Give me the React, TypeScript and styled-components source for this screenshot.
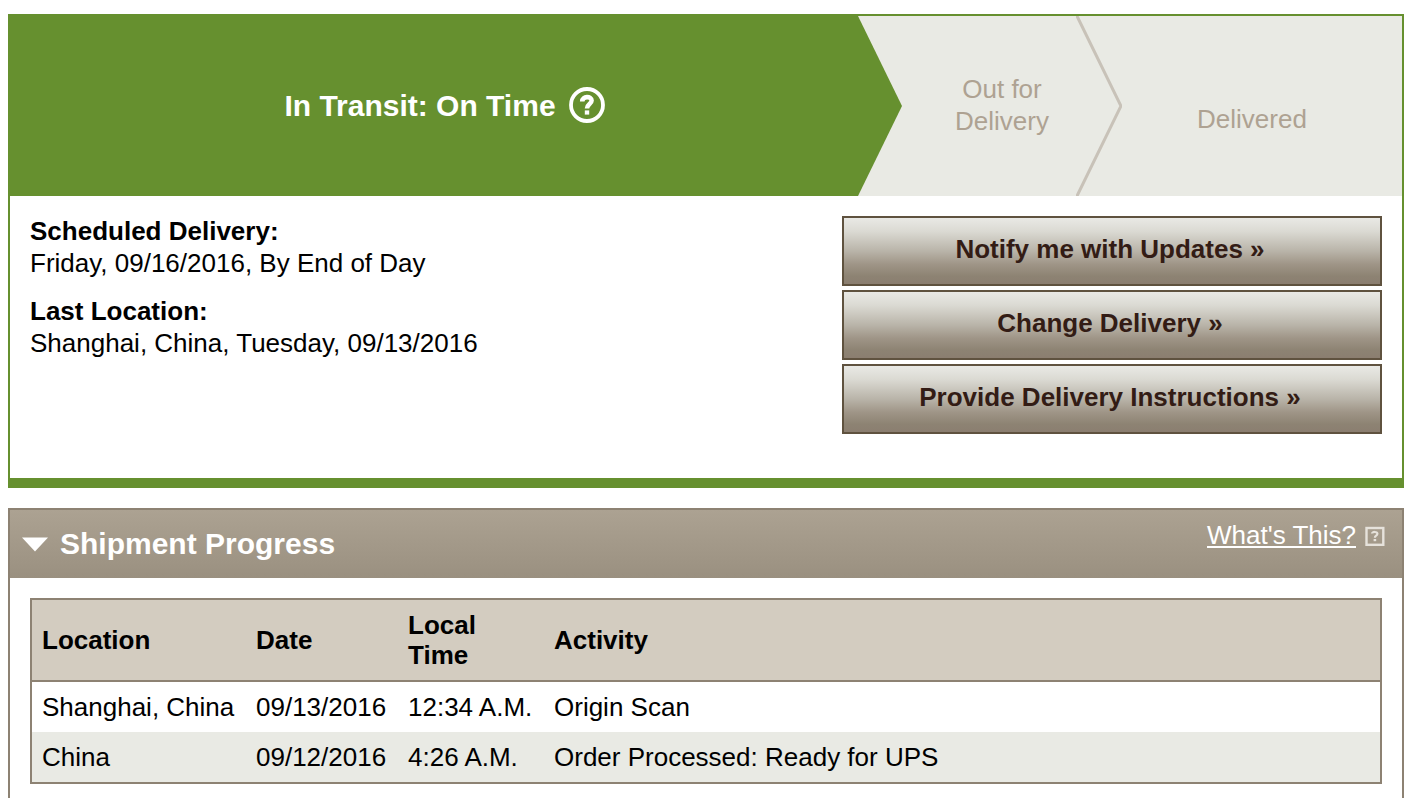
import React from "react";
import styled, { createGlobalStyle } from "styled-components";

const GlobalStyle = createGlobalStyle`
  * { box-sizing: border-box; }
  html { scrollbar-width: none; }
  body {
    margin: 0;
    background: #fff;
    color: #000;
    font-family: "Liberation Sans", Arial, sans-serif;
    font-size: 26px;
    line-height: 32px;
  }
`;

const green = "#66902f";
const taupe = "#8d8273";
const mist = "#e9eae4";

const Page = styled.main`
  display: flex;
  flex-direction: column;
  gap: 20px;
  padding: 14px 16px 0 8px;
`;

const StatusCard = styled.section`
  border: 2px solid ${green};
  border-bottom-width: 10px;
`;

const Steps = styled.ol`
  display: grid;
  grid-template-columns: 892fr 220fr 280fr;
  height: 180px;
  margin: 0;
  padding: 0;
  list-style: none;
  background: ${mist};
`;

const Step = styled.li`
  display: flex;
  color: #aea292;
`;

const StepLabel = styled.div`
  flex: 1;
  display: flex;
  align-items: center;
  justify-content: center;
  text-align: center;
  padding: 0 0 2px 26px;
`;

const CurrentLabel = styled(StepLabel)`
  gap: 12px;
  padding: 0 0 0 22px;
  background: ${green};
  color: #fff;
  font-size: 30px;
  font-weight: bold;
`;

const FinalLabel = styled(StepLabel)`
  padding: 26px 20px 0 0;
`;

const Chevron = styled.svg`
  flex: none;
  display: block;
`;

const IconButton = styled.button`
  display: flex;
  padding: 0;
  border: 0;
  background: none;
  color: inherit;
  cursor: pointer;
`;

const Details = styled.div`
  display: flex;
  justify-content: space-between;
  padding: 20px 20px 44px;
`;

const Facts = styled.dl`
  margin: -1px 0 0;
`;

const Term = styled.dt`
  font-weight: bold;
`;

const Value = styled.dd`
  margin: 0 0 16px;
`;

const Actions = styled.div`
  display: flex;
  flex-direction: column;
  gap: 4px;
  width: 540px;
`;

const ActionButton = styled.button`
  height: 70px;
  padding: 0 4px 4px 0;
  border: 2px solid #5f523f;
  background: linear-gradient(
    #e9e9e5 0%,
    #dbdad3 20%,
    #b9b4a9 50%,
    #9f9587 70%,
    #8d8373 88%,
    #8b7e70 100%
  );
  color: #331c15;
  font: bold 26px/32px "Liberation Sans", Arial, sans-serif;
  cursor: pointer;
`;

const Panel = styled.section`
  border: 2px solid ${taupe};
`;

const PanelHeader = styled.header`
  display: flex;
  justify-content: space-between;
  height: 68px;
  padding: 0 17px 0 12px;
  background: linear-gradient(#aca292, #9a9080);
  color: #fff;
`;

const PanelTitle = styled.h2`
  margin: 0;
  font-size: 30px;
  display: flex;
`;

const Toggle = styled.button`
  display: flex;
  align-items: center;
  gap: 12px;
  padding: 0;
  border: 0;
  background: none;
  color: inherit;
  font: inherit;
  cursor: pointer;
`;

const Help = styled.div`
  display: flex;
  align-items: center;
  gap: 9px;
  height: 50px;
`;

const HelpLink = styled.a`
  color: #fff;
  text-decoration: underline;
  text-decoration-thickness: 2px;
  text-underline-offset: 2px;
`;

const PanelBody = styled.div`
  padding: 20px;
`;

const ScanTable = styled.table`
  width: 100%;
  table-layout: fixed;
  border: 2px solid ${taupe};
  border-spacing: 0;
  line-height: 30px;
  text-align: left;
`;

const Column = styled.col<{ $width?: number }>`
  width: ${(p) => (p.$width ? `${p.$width}px` : "auto")};
`;

const HeadCell = styled.th`
  padding: 10px;
  border-bottom: 2px solid ${taupe};
  background: #d3ccc0;
`;

const Row = styled.tr`
  &:nth-child(even) {
    background: ${mist};
  }
`;

const Cell = styled.td`
  padding: 10px;
  white-space: nowrap;
`;

const scans = [
  ["Shanghai, China", "09/13/2016", "12:34 A.M.", "Origin Scan"],
  ["China", "09/12/2016", "4:26 A.M.", "Order Processed: Ready for UPS"],
];

const actions = [
  "Notify me with Updates »",
  "Change Delivery »",
  "Provide Delivery Instructions »",
];

export default function App() {
  return (
    <>
      <GlobalStyle />
      <Page>
        <StatusCard>
          <Steps>
            <Step aria-current="step">
              <CurrentLabel>
                In Transit: On Time
                <IconButton type="button" aria-label="Status help">
                  <svg width="38" height="38" viewBox="0 0 38 38" fill="none" stroke="currentColor">
                    <circle cx="19" cy="18" r="16" strokeWidth="3.8" />
                    <path d="M14.200 14.400C14.200 8.800 23.600 8.800 23.600 13.600C23.600 17.200 19 17 19 21.600" strokeWidth="4.6" />
                    <path d="M16.800 23.400h4.400v4.200h-4.400z" fill="currentColor" stroke="none" />
                  </svg>
                </IconButton>
              </CurrentLabel>
              <Chevron width="44" height="180" viewBox="0 0 44 180" aria-hidden="true">
                <path d="M0 0L44 90L0 180Z" fill={green} />
              </Chevron>
            </Step>
            <Step>
              <StepLabel>
                Out for
                <br />
                Delivery
              </StepLabel>
              <Chevron width="46" height="180" viewBox="0 0 46 180" aria-hidden="true">
                <path d="M0.500 -1L45 90L0.500 181" fill="none" stroke="#c8c2b8" strokeWidth="3" />
              </Chevron>
            </Step>
            <Step>
              <FinalLabel>Delivered</FinalLabel>
            </Step>
          </Steps>
          <Details>
            <Facts>
              <Term>Scheduled Delivery:</Term>
              <Value>Friday, 09/16/2016, By End of Day</Value>
              <Term>Last Location:</Term>
              <Value>Shanghai, China, Tuesday, 09/13/2016</Value>
            </Facts>
            <Actions>
              {actions.map((label) => (
                <ActionButton key={label} type="button">
                  {label}
                </ActionButton>
              ))}
            </Actions>
          </Details>
        </StatusCard>

        <Panel>
          <PanelHeader>
            <PanelTitle>
              <Toggle type="button" aria-expanded="true">
                <svg width="26" height="15" viewBox="0 0 26 15" aria-hidden="true">
                  <path d="M0 0.500H26L13 14.500Z" fill="#fff" />
                </svg>
                Shipment Progress
              </Toggle>
            </PanelTitle>
            <Help>
              <HelpLink href="#help">What's This?</HelpLink>
              <svg width="20" height="22" viewBox="0 0 20 22" fill="none" stroke="#e6e2db" aria-hidden="true">
                <rect x="1.500" y="4" width="16.800" height="16.800" strokeWidth="2.4" />
                <path d="M7 9.600C7 7.400 12.400 7.400 12.400 9.800C12.400 12 9.900 11.400 9.900 13.800" strokeWidth="2.2" />
                <path d="M9.900 15v2.200" strokeWidth="2.600" />
              </svg>
            </Help>
          </PanelHeader>
          <PanelBody>
            <ScanTable>
              <colgroup>
                <Column $width={214} />
                <Column $width={152} />
                <Column $width={146} />
                <Column />
              </colgroup>
              <thead>
                <tr>
                  <HeadCell scope="col">Location</HeadCell>
                  <HeadCell scope="col">Date</HeadCell>
                  <HeadCell scope="col">Local Time</HeadCell>
                  <HeadCell scope="col">Activity</HeadCell>
                </tr>
              </thead>
              <tbody>
                {scans.map((scan) => (
                  <Row key={scan[1]}>
                    {scan.map((text) => (
                      <Cell key={text}>{text}</Cell>
                    ))}
                  </Row>
                ))}
              </tbody>
            </ScanTable>
          </PanelBody>
        </Panel>
      </Page>
    </>
  );
}
